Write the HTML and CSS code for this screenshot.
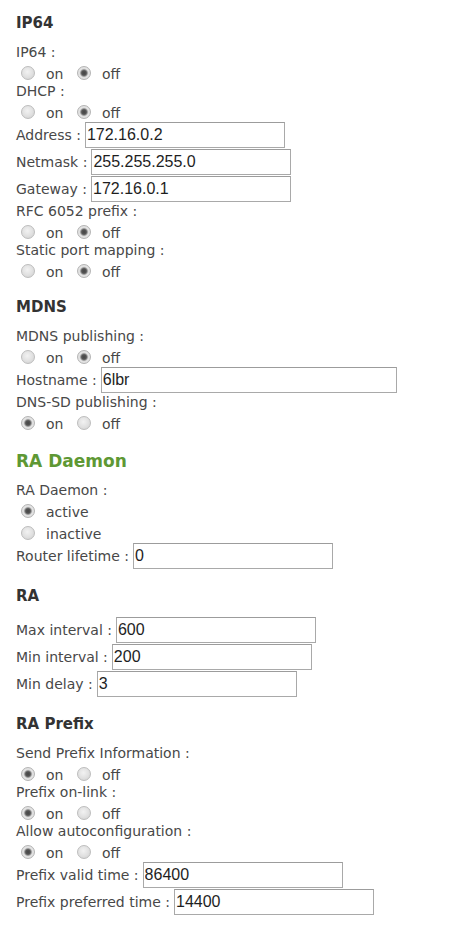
FILE: index.html
```html
<!DOCTYPE html>
<html>
<head>
<meta charset="utf-8">
<link rel="stylesheet" href="styles.css">
</head>
<body>
<div class="page">
  <div class="sec">
    <h3 class="hd first">IP64</h3>
    <div class="lbl">IP64 :</div>
    <div class="radios">
      <label class="opt"><input type="radio" class="rd" name="ip64">on</label>
      <label class="opt"><input type="radio" class="rd" name="ip64" checked>off</label>
    </div>
    <div class="lbl">DHCP :</div>
    <div class="radios">
      <label class="opt"><input type="radio" class="rd" name="dhcp">on</label>
      <label class="opt"><input type="radio" class="rd" name="dhcp" checked>off</label>
    </div>
    <div class="inrow"><span class="il">Address :</span><input class="tx" type="text" value="172.16.0.2"></div>
    <div class="inrow"><span class="il">Netmask :</span><input class="tx" type="text" value="255.255.255.0"></div>
    <div class="inrow"><span class="il">Gateway :</span><input class="tx" type="text" value="172.16.0.1"></div>
    <div class="lbl">RFC 6052 prefix :</div>
    <div class="radios">
      <label class="opt"><input type="radio" class="rd" name="rfc">on</label>
      <label class="opt"><input type="radio" class="rd" name="rfc" checked>off</label>
    </div>
    <div class="lbl">Static port mapping :</div>
    <div class="radios">
      <label class="opt"><input type="radio" class="rd" name="spm">on</label>
      <label class="opt"><input type="radio" class="rd" name="spm" checked>off</label>
    </div>
  </div>

  <div class="sec">
    <h3 class="hd">MDNS</h3>
    <div class="lbl">MDNS publishing :</div>
    <div class="radios">
      <label class="opt"><input type="radio" class="rd" name="mdns">on</label>
      <label class="opt"><input type="radio" class="rd" name="mdns" checked>off</label>
    </div>
    <div class="inrow"><span class="il">Hostname :</span><input class="tx wide" type="text" value="6lbr"></div>
    <div class="lbl">DNS-SD publishing :</div>
    <div class="radios">
      <label class="opt"><input type="radio" class="rd" name="dnssd" checked>on</label>
      <label class="opt"><input type="radio" class="rd" name="dnssd">off</label>
    </div>
  </div>

  <div class="sec">
    <h3 class="hd big">RA Daemon</h3>
    <div class="lbl">RA Daemon :</div>
    <div class="radios">
      <label class="opt"><input type="radio" class="rd" name="rad" checked>active</label>
    </div>
    <div class="radios">
      <label class="opt"><input type="radio" class="rd" name="rad">inactive</label>
    </div>
    <div class="inrow"><span class="il">Router lifetime :</span><input class="tx" type="text" value="0"></div>
  </div>

  <div class="sec">
    <h3 class="hd">RA</h3>
    <div class="inrow"><span class="il">Max interval :</span><input class="tx" type="text" value="600"></div>
    <div class="inrow"><span class="il">Min interval :</span><input class="tx" type="text" value="200"></div>
    <div class="inrow"><span class="il">Min delay :</span><input class="tx" type="text" value="3"></div>
  </div>

  <div class="sec">
    <h3 class="hd">RA Prefix</h3>
    <div class="lbl">Send Prefix Information :</div>
    <div class="radios">
      <label class="opt"><input type="radio" class="rd" name="spi" checked>on</label>
      <label class="opt"><input type="radio" class="rd" name="spi">off</label>
    </div>
    <div class="lbl">Prefix on-link :</div>
    <div class="radios">
      <label class="opt"><input type="radio" class="rd" name="pol" checked>on</label>
      <label class="opt"><input type="radio" class="rd" name="pol">off</label>
    </div>
    <div class="lbl">Allow autoconfiguration :</div>
    <div class="radios">
      <label class="opt"><input type="radio" class="rd" name="aac" checked>on</label>
      <label class="opt"><input type="radio" class="rd" name="aac">off</label>
    </div>
    <div class="inrow"><span class="il">Prefix valid time :</span><input class="tx" type="text" value="86400"></div>
    <div class="inrow"><span class="il">Prefix preferred time :</span><input class="tx" type="text" value="14400"></div>
  </div>
</div>
</body>
</html>
```

FILE: styles.css
```css
html, body {
  margin: 0;
  padding: 0;
  background: #ffffff;
}

.page {
  padding: 0 16px;
  font-family: "DejaVu Sans", Verdana, sans-serif;
  font-size: 14px;
  color: #484848;
}

.hd {
  margin: 16px 0 11px;
  font-size: 15px;
  line-height: 20px;
  font-weight: bold;
  color: #333333;
}

.hd.first {
  margin-top: 13px;
}

.hd.big {
  margin: 17px 0 10px;
  font-size: 17px;
  line-height: 22px;
  color: #5e9834;
}

.lbl {
  height: 17px;
  line-height: 17px;
  white-space: nowrap;
}

.radios {
  box-sizing: border-box;
  height: 22px;
  padding-top: 5px;
  line-height: 17px;
  white-space: nowrap;
}

.opt {
  margin-right: 4px;
}

.rd {
  -webkit-appearance: none;
  appearance: none;
  box-sizing: border-box;
  width: 14px;
  height: 14px;
  margin: 0 11px 0 5px;
  border: 1px solid #bdbdbd;
  border-radius: 50%;
  background: radial-gradient(circle at 45% 40%, #f2f2f2 0, #e0e0e0 55%, #cdcdcd 100%);
  vertical-align: -1px;
}

.rd:checked {
  border-color: #b4b4b4;
  background: radial-gradient(circle at 50% 50%, #444444 0, #555555 2.3px, #8a8a8a 3.2px, #d8d8d8 4.2px, #e6e6e6 5px, #cccccc 100%);
}

.inrow {
  display: flex;
  align-items: baseline;
  height: 27px;
  white-space: nowrap;
}

.il {
  line-height: 17px;
  margin-right: 4px;
}

.tx {
  box-sizing: border-box;
  width: 200px;
  height: 26px;
  margin: 0;
  padding: 0 1px;
  border: 1px solid #a9a9a9;
  border-top-color: #9c9c9c;
  font-family: "Liberation Sans", Arial, sans-serif;
  font-size: 16px;
  color: #1e1e1e;
  background: #ffffff;
  outline: none;
}

.tx.wide {
  width: 296px;
}
```
